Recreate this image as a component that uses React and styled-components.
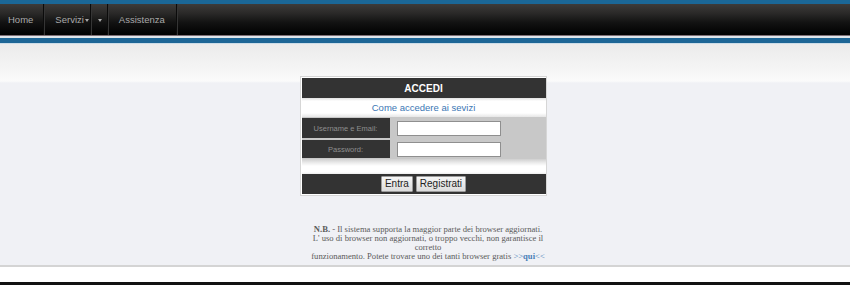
import React from "react";
import styled, { createGlobalStyle } from "styled-components";

const GlobalStyle = createGlobalStyle`
  html, body {
    margin: 0;
    padding: 0;
    background: #ffffff;
    font-family: "Liberation Sans", Arial, sans-serif;
  }
`;

const Page = styled.div`
  width: 850px;
  height: 285px;
  display: flex;
  flex-direction: column;
  overflow: hidden;
`;

const Header = styled.header`
  display: flex;
  flex-direction: column;
  border-top: 4px solid #1b6797;
`;

const NavBar = styled.nav`
  height: 31px;
  display: flex;
  align-items: stretch;
  background: linear-gradient(#3d3b3a, #2a2928 30%, #121212 60%, #000000);
  border-bottom: 1px solid #7d6e74;
`;

const NavItem = styled.a`
  display: flex;
  align-items: center;
  padding: ${(p) => p.$pad || "0 11px"};
  font-size: 9.5px;
  color: #a9a9a9;
  text-decoration: none;
  border-right: 1px solid #0b0b0b;
  box-shadow: 1px 0 0 #353535;
`;

const Caret = styled.span`
  width: 0;
  height: 0;
  margin-left: 1px;
  margin-top: 1px;
  border-left: 2.5px solid transparent;
  border-right: 2.5px solid transparent;
  border-top: 3px solid #a9a9a9;
`;

const Stripe = styled.div`
  height: 5px;
  background: #1d6696;
  border-top: 2px solid #dfe5ea;
  border-bottom: 1px solid #cddde8;
`;

const Main = styled.main`
  height: 221px;
  display: flex;
  flex-direction: column;
  align-items: center;
  background: linear-gradient(#ebebeb, #f6f6f6 28px, #fbfbfb 37px, #f0f1f5 39px, #f0f1f5);
`;

const LoginBox = styled.div`
  margin-top: 32px;
  width: 244px;
  padding: 1px 0 1px 1px;
  border: 1px solid #d6d6d6;
  background: #ffffff;
  display: flex;
  flex-direction: column;
  margin-left: -4px;
`;

const BoxTitle = styled.div`
  height: 20px;
  display: flex;
  align-items: center;
  justify-content: center;
  background: #333333;
  color: #ffffff;
  font-size: 10px;
  font-weight: bold;
`;

const HelpRow = styled.div`
  height: 19px;
  display: flex;
  align-items: center;
  justify-content: center;
  background: linear-gradient(#e0e0e0, #ffffff 3px, #ffffff 15px, #e6e6e6);
`;

const HelpLink = styled.a`
  color: #3a76b4;
  font-size: 9.5px;
  text-decoration: none;
`;

const FormArea = styled.div`
  background: #c8c8c8;
  padding: 1px 0 1px;
  display: flex;
  flex-direction: column;
  gap: 2px;
`;

const FieldRow = styled.div`
  display: flex;
  align-items: center;
  gap: 7px;
`;

const FieldLabel = styled.label`
  width: 88px;
  height: ${(p) => p.$h || 19}px;
  display: flex;
  align-items: center;
  justify-content: center;
  background: #333333;
  color: #8e8e8e;
  font-size: 7.5px;
`;

const Input = styled.input`
  width: 100px;
  height: 11px;
  padding: 1px;
  border: 1px solid #8f8f8f;
  background: #ffffff;
  outline: none;
`;

const Spacer = styled.div`
  height: 15px;
  background: linear-gradient(#cfcfcf, #ededed 4px, #ffffff 7px, #ffffff 13px, #ececec);
`;

const BoxFooter = styled.div`
  height: 20px;
  display: flex;
  align-items: center;
  justify-content: center;
  gap: 3px;
  background: #333333;
`;

const Button = styled.button`
  height: 16px;
  padding: 0 3px;
  font-family: "Liberation Sans", Arial, sans-serif;
  font-size: 10px;
  color: #222222;
  background: linear-gradient(#f6f6f6, #dcdcdc);
  border: 1px solid #9c9c9c;
  border-radius: 1px;
  line-height: 14px;
`;

const Note = styled.p`
  margin: 29px 0 0 6px;
  width: 240px;
  text-align: center;
  font-family: "Liberation Serif", "Times New Roman", serif;
  font-size: 8.6px;
  line-height: 9px;
  color: #5a5a5a;
`;

const NoteLink = styled.a`
  color: #4a7fb8;
  text-decoration: none;
`;

const Bottom = styled.footer`
  flex: 1;
  border-top: 2px solid #d4d4d4;
  background: #ffffff;
  display: flex;
  flex-direction: column;
  justify-content: flex-end;
`;

const BlackBar = styled.div`
  height: 3px;
  background: #111111;
`;

export default function App() {
  return (
    <Page>
      <GlobalStyle />
      <Header>
        <NavBar>
          <NavItem $pad="0 10px 0 8px">Home</NavItem>
          <NavItem $pad="0 1px 0 11px">
            Servizi
            <Caret />
          </NavItem>
          <NavItem $pad="0 5px 0 6px">
            <Caret />
          </NavItem>
          <NavItem>Assistenza</NavItem>
        </NavBar>
        <Stripe />
      </Header>
      <Main>
        <LoginBox>
          <BoxTitle>ACCEDI</BoxTitle>
          <HelpRow>
            <HelpLink href="#">Come accedere ai sevizi</HelpLink>
          </HelpRow>
          <FormArea>
            <FieldRow>
              <FieldLabel $h={20}>Username e Email:</FieldLabel>
              <Input type="text" />
            </FieldRow>
            <FieldRow>
              <FieldLabel $h={18}>Password:</FieldLabel>
              <Input type="password" />
            </FieldRow>
          </FormArea>
          <Spacer />
          <BoxFooter>
            <Button>Entra</Button>
            <Button>Registrati</Button>
          </BoxFooter>
        </LoginBox>
        <Note>
          <b>N.B.</b> - Il sistema supporta la maggior parte dei browser aggiornati.
          <br />
          L' uso di browser non aggiornati, o troppo vecchi, non garantisce il corretto
          <br />
          funzionamento. Potete trovare uno dei tanti browser gratis{" "}
          <NoteLink href="#">
            &gt;&gt;<b>qui</b>&lt;&lt;
          </NoteLink>
        </Note>
      </Main>
      <Bottom>
        <BlackBar />
      </Bottom>
    </Page>
  );
}
